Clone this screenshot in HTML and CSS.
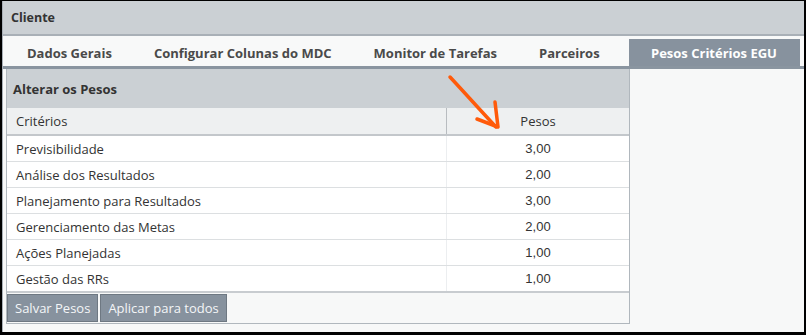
FILE: index.html
```html
<!DOCTYPE html>
<html lang="pt-BR">
<head>
    <meta charset="UTF-8">
    <title>Cliente</title>
    <link rel="stylesheet" href="styles.css">
</head>
<body>

<div class="window">
    <div class="header">Cliente</div>

    <!-- abas -->
    <div class="tabs">
        <a class="tab">Dados Gerais</a>
        <a class="tab">Configurar Colunas do MDC</a>
        <a class="tab">Monitor de Tarefas</a>
        <a class="tab">Parceiros</a>
        <a class="tab active">Pesos Critérios EGU</a>
    </div>

    <div class="content">
        <div class="panel">
            <div class="panel-title">Alterar os Pesos</div>
            <table class="grid">
                <thead>
                    <tr><th class="col-name">Critérios</th><th class="col-val">Pesos</th></tr>
                </thead>
                <tbody>
                    <tr><td>Previsibilidade</td><td class="num">3,00</td></tr>
                    <tr><td>Análise dos Resultados</td><td class="num">2,00</td></tr>
                    <tr><td>Planejamento para Resultados</td><td class="num">3,00</td></tr>
                    <tr><td>Gerenciamento das Metas</td><td class="num">2,00</td></tr>
                    <tr><td>Ações Planejadas</td><td class="num">1,00</td></tr>
                    <tr><td>Gestão das RRs</td><td class="num">1,00</td></tr>
                </tbody>
            </table>
            <div class="actions">
                <button class="btn">Salvar Pesos</button>
                <button class="btn">Aplicar para todos</button>
            </div>
        </div>
    </div>

    <!-- seta desenhada por cima -->
    <svg class="arrow" width="70" height="70" viewBox="0 0 70 70">
        <path d="M4 5 C 18 20, 34 38, 50 55" fill="none" stroke="#ff5a0a" stroke-width="3.5" stroke-linecap="round"/>
        <path d="M31 47 L 52 55 L 49 30" fill="none" stroke="#ff5a0a" stroke-width="3.5" stroke-linecap="round" stroke-linejoin="round"/>
    </svg>
</div>

</body>
</html>
```

FILE: styles.css
```css
body {
    margin: 0;
    font-family: "Open Sans", "Noto Sans", sans-serif;
    font-size: 13px;
    color: #333;
    background: #000;
}

.window {
    position: relative;
    width: 802px;
    height: 331px;
    margin: 1px 2px 2px 2px;
    background: #f7f8f8;
    display: flex;
    flex-direction: column;
    border-left: 1px solid #a9b0b7;
    box-sizing: border-box;
}

.header {
    height: 33px;
    line-height: 33px;
    padding-left: 8px;
    background: #cbd0d4;
    border-bottom: 2px solid #a9b0b7;
    font-weight: bold;
    color: #333;
    font-size: 12.5px;
}

.tabs {
    display: flex;
    align-items: flex-end;
    height: 30px;
    padding-left: 3px;
    padding-right: 4px;
    background: #f8f9f9;
    border-bottom: 3px solid #8a95a0;
}

.tab {
    flex-shrink: 0;
    white-space: nowrap;
    padding: 1px 21px 0 21px;
    height: 26px;
    line-height: 26px;
    font-weight: bold;
    font-size: 13px;
    color: #4a4a4a;
    cursor: pointer;
}

.tab.active {
    margin-left: auto;
    width: 149px;
    padding-left: 22px;
    padding-right: 0;
    background: #87929e;
    color: #fff;
}

.content {
    flex: 1;
    padding: 0 0 8px 3px;
}

.panel {
    width: 624px;
    height: 100%;
    box-sizing: border-box;
    border: 1px solid #b0b7bd;
    border-top: none;
    background: #f7f8f8;
    display: flex;
    flex-direction: column;
}

.panel-title {
    height: 39px;
    line-height: 40px;
    padding-left: 6px;
    background: #cbd0d4;
    font-weight: bold;
    font-size: 13px;
    color: #333;
}

.grid {
    width: 100%;
    border-collapse: collapse;
    background: #fff;
}

.grid th {
    height: 26px;
    font-weight: normal;
    background: #eef0f1;
    border-bottom: 2px solid #c3c7cb;
    padding: 0 9px;
}

.grid th.col-name {
    text-align: left;
    width: 421px;
    border-right: 1px solid #b8bcc0;
}

.grid td {
    height: 25px;
    padding: 0 9px;
    border-bottom: 1px solid #dcdfe1;
}

.grid td:first-child {
    border-right: 1px solid #eceef0;
}

.grid tbody tr:last-child td {
    border-bottom: 2px solid #c8ccd0;
}

.num {
    text-align: center;
    font-family: "Liberation Sans", Arial, sans-serif;
}

.actions {
    display: flex;
    gap: 2px;
    padding: 1px 0 0 0;
}

.btn {
    font-family: inherit;
    font-size: 13px;
    color: #f4f6f8;
    background: #87929e;
    border: 1px solid #6e7882;
    height: 28px;
    padding: 0 7px;
    cursor: pointer;
}

.arrow {
    position: absolute;
    left: 443px;
    top: 71px;
}
```
